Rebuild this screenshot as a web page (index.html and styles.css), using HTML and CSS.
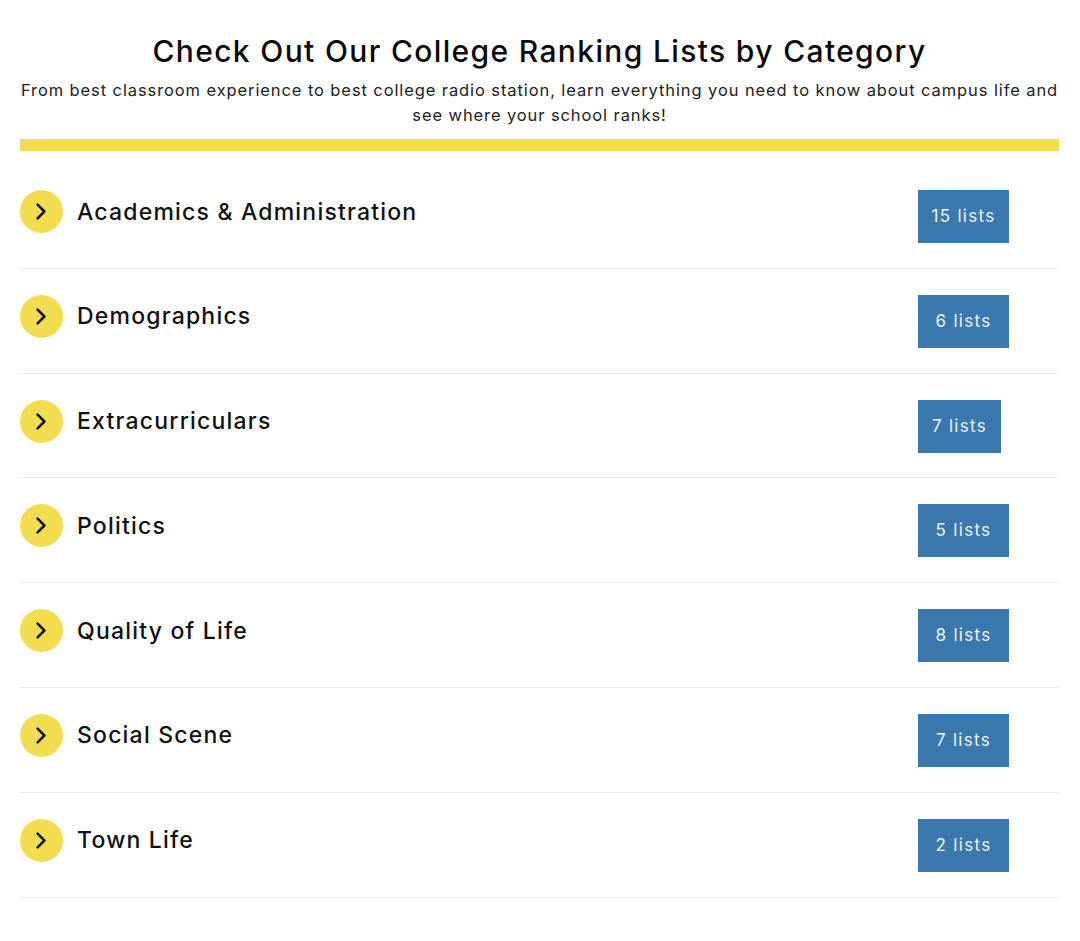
FILE: index.html
```html
<!DOCTYPE html>
<html>
<head>
<meta charset="utf-8">
<link rel="stylesheet" href="styles.css">
</head>
<body>
<div class="page">
  <header class="head">
    <h1 class="title">Check Out Our College Ranking Lists by Category</h1>
    <p class="sub">From best classroom experience to best college radio station, learn everything you need to know about campus life and see where your school ranks!</p>
  </header>
  <div class="bar"></div>
  <ul class="list">
    <li class="row"><div class="left"><span class="dot"><svg viewBox="0 0 44 44" width="44" height="44"><path d="M18 15 L25 22 L18 29" fill="none" stroke="#111" stroke-width="2.6" stroke-linecap="round" stroke-linejoin="round"/></svg></span><span class="name">Academics &amp; Administration</span></div><div class="right"><span class="badge">15 lists</span></div></li>
    <li class="row"><div class="left"><span class="dot"><svg viewBox="0 0 44 44" width="44" height="44"><path d="M18 15 L25 22 L18 29" fill="none" stroke="#111" stroke-width="2.6" stroke-linecap="round" stroke-linejoin="round"/></svg></span><span class="name">Demographics</span></div><div class="right"><span class="badge">6 lists</span></div></li>
    <li class="row"><div class="left"><span class="dot"><svg viewBox="0 0 44 44" width="44" height="44"><path d="M18 15 L25 22 L18 29" fill="none" stroke="#111" stroke-width="2.6" stroke-linecap="round" stroke-linejoin="round"/></svg></span><span class="name">Extracurriculars</span></div><div class="right"><span class="badge badge-narrow">7 lists</span></div></li>
    <li class="row"><div class="left"><span class="dot"><svg viewBox="0 0 44 44" width="44" height="44"><path d="M18 15 L25 22 L18 29" fill="none" stroke="#111" stroke-width="2.6" stroke-linecap="round" stroke-linejoin="round"/></svg></span><span class="name">Politics</span></div><div class="right"><span class="badge">5 lists</span></div></li>
    <li class="row"><div class="left"><span class="dot"><svg viewBox="0 0 44 44" width="44" height="44"><path d="M18 15 L25 22 L18 29" fill="none" stroke="#111" stroke-width="2.6" stroke-linecap="round" stroke-linejoin="round"/></svg></span><span class="name">Quality of Life</span></div><div class="right"><span class="badge">8 lists</span></div></li>
    <li class="row"><div class="left"><span class="dot"><svg viewBox="0 0 44 44" width="44" height="44"><path d="M18 15 L25 22 L18 29" fill="none" stroke="#111" stroke-width="2.6" stroke-linecap="round" stroke-linejoin="round"/></svg></span><span class="name">Social Scene</span></div><div class="right"><span class="badge">7 lists</span></div></li>
    <li class="row"><div class="left"><span class="dot"><svg viewBox="0 0 44 44" width="44" height="44"><path d="M18 15 L25 22 L18 29" fill="none" stroke="#111" stroke-width="2.6" stroke-linecap="round" stroke-linejoin="round"/></svg></span><span class="name">Town Life</span></div><div class="right"><span class="badge">2 lists</span></div></li>
  </ul>
</div>
</body>
</html>
```
FILE: styles.css
```css
* { box-sizing: border-box; }
html, body { margin: 0; padding: 0; background: #fff; }
body { font-family: "Inter", "Liberation Sans", sans-serif; color: #111; }
.page { padding: 0 21px 0 20px; }
.head { padding-top: 31px; text-align: center; }
.title { margin: 0; font-size: 30px; font-weight: 500; line-height: 40px; color: #0a0a0a; letter-spacing: 1.35px; }
.sub { margin: 7px 0 0; font-size: 16.5px; line-height: 25px; color: #222; letter-spacing: 0.9px; }
.bar { margin-top: 11px; height: 12px; background: #f2dc50; }
.list { list-style: none; margin: 0; padding: 13px 0 0; }
.row { display: grid; grid-template-columns: 1fr 141px; padding: 26px 0 25px; border-bottom: 1px solid #ececec; height: 104.8px; }
.left { display: flex; align-items: center; height: 43px; gap: 14px; }
.dot { width: 43px; height: 43px; border-radius: 50%; background: #f2dc50; display: flex; align-items: center; justify-content: center; flex: none; }
.dot svg { width: 43px; height: 43px; }
.name { font-size: 23px; font-weight: 500; color: #111; letter-spacing: 1.2px; }
.right { display: flex; }
.badge { display: inline-block; height: 53px; line-height: 53px; min-width: 91px; text-align: center; padding: 0 12px; background: #3a78ad; color: #eef3f8; font-size: 17px; letter-spacing: 1.3px; }
.badge-narrow { min-width: 83px; }
```
